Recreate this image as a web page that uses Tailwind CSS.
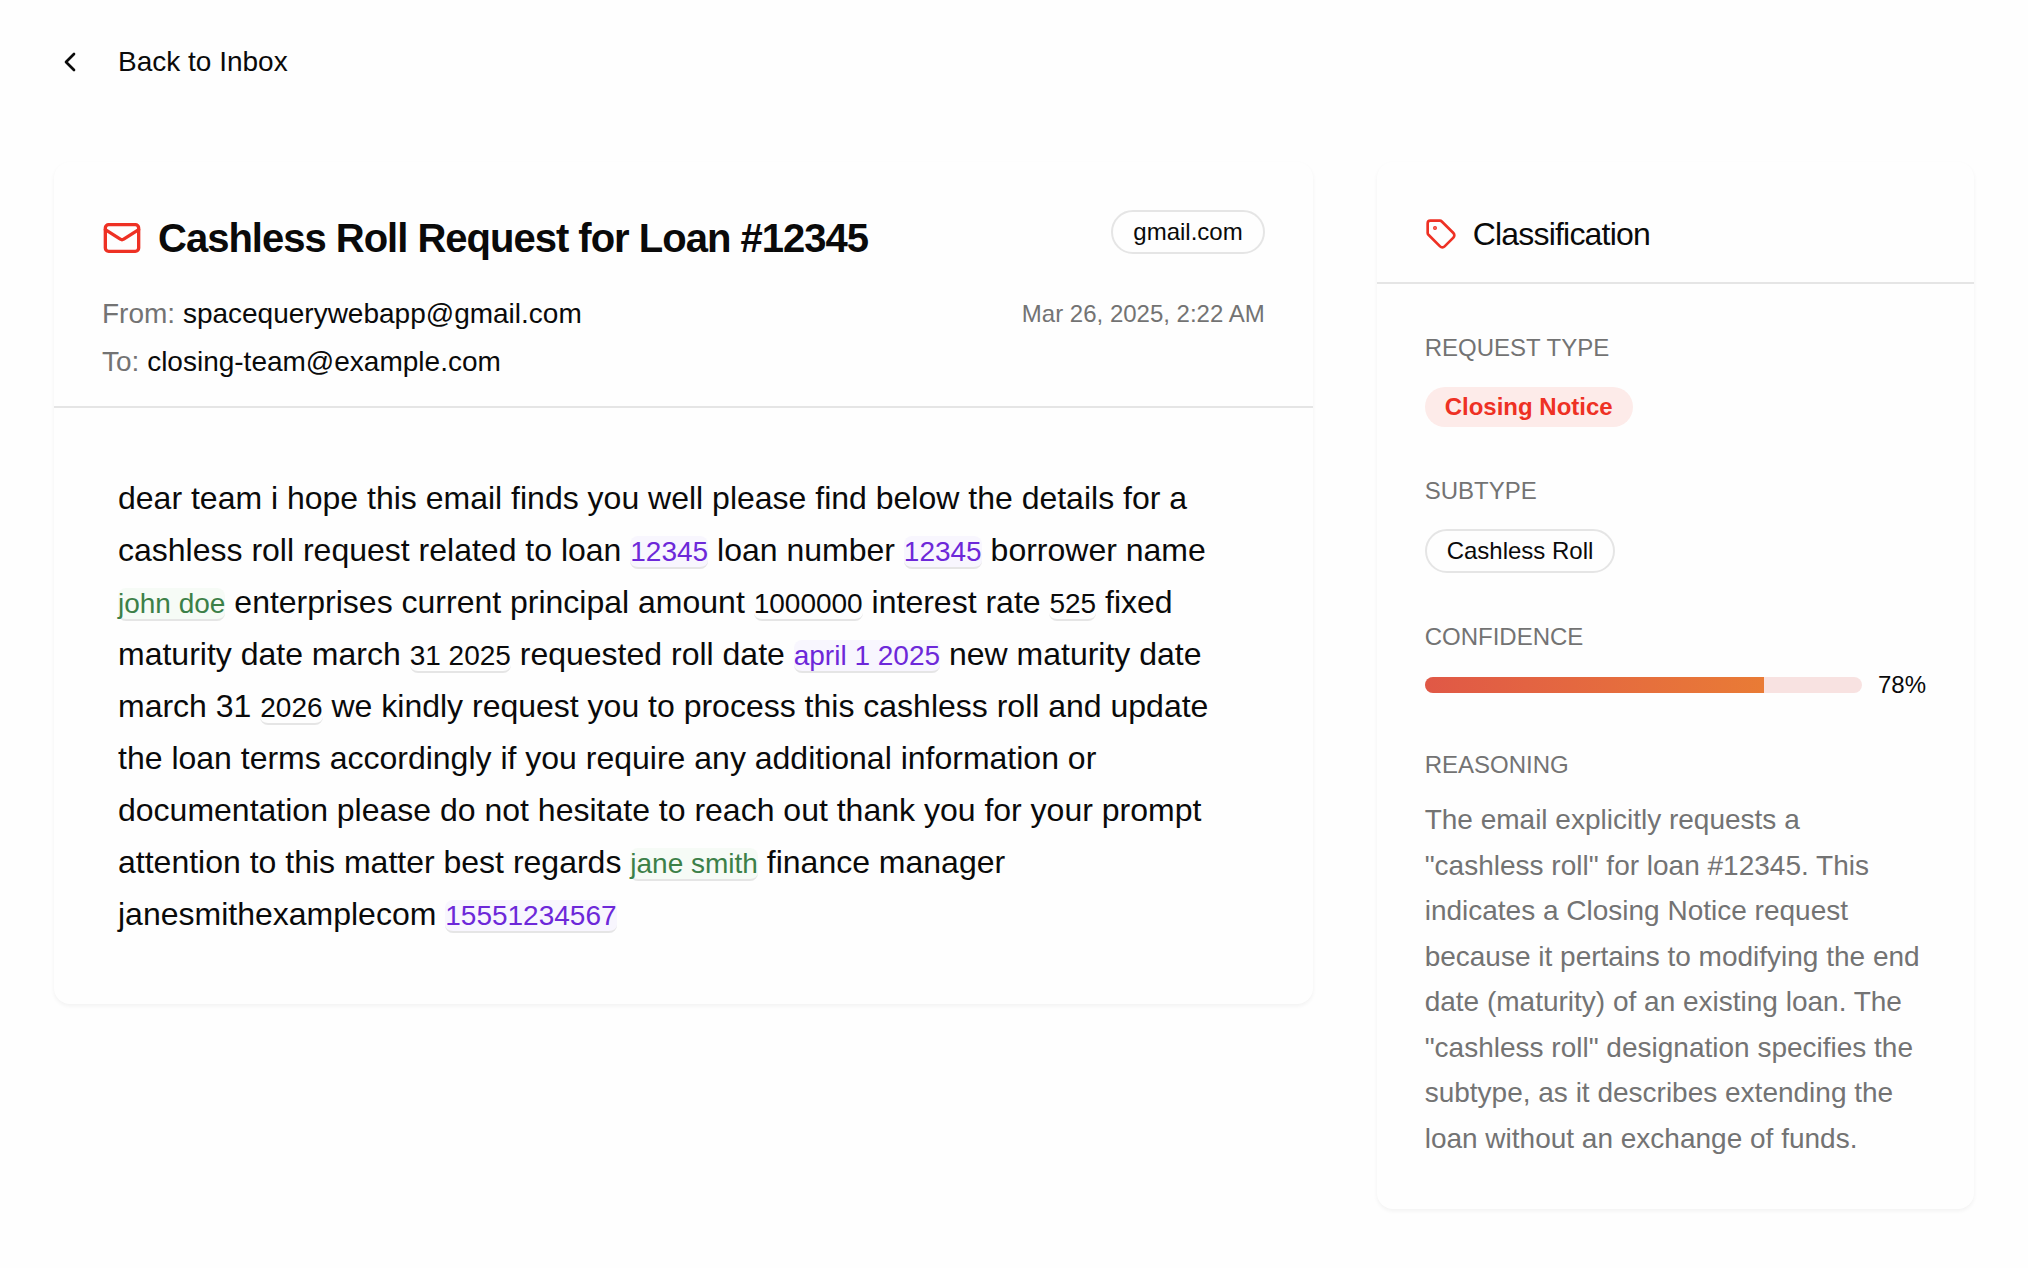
<!DOCTYPE html>
<html lang="en">
<head>
<meta charset="utf-8">
<meta name="viewport" content="width=device-width, initial-scale=1">
<title>Cashless Roll Request for Loan #12345</title>
<script src="https://cdn.jsdelivr.net/npm/@tailwindcss/browser@4"></script>
</head>
<body class="min-h-screen bg-[#fefefe] font-['Liberation_Sans',Arial,sans-serif] text-[28px] leading-10 text-neutral-950">
<div class="mx-auto max-w-[1968px] px-6 pt-8">
  <nav class="flex h-[60px] items-center">
    <a href="#" class="flex items-center gap-8">
      <svg class="size-8" viewBox="0 0 24 24" fill="none" stroke="currentColor" stroke-width="2" stroke-linecap="round" stroke-linejoin="round" aria-hidden="true"><path d="m15 18-6-6 6-6"/></svg>
      Back to Inbox
    </a>
  </nav>

  <main class="mt-[70px] grid grid-cols-3 items-start gap-16">
    <article class="col-span-2 rounded-2xl bg-[#fefefe] shadow-[0_2px_4px_rgba(0,0,0,0.05)]">
      <header class="border-b-2 border-neutral-200 px-12 pt-12 pb-6">
        <div class="flex items-start justify-between">
          <h1 class="flex items-center gap-4 text-[40px] leading-14 font-bold tracking-tight">
            <svg class="size-10 text-[#ee3124]" viewBox="0 0 24 24" fill="none" stroke="currentColor" stroke-width="2" stroke-linecap="round" stroke-linejoin="round" aria-hidden="true"><rect width="20" height="16" x="2" y="4" rx="2"/><path d="m22 7-8.97 5.7a1.94 1.94 0 0 1-2.06 0L2 7"/></svg>
            Cashless Roll Request for Loan #12345
          </h1>
          <span class="rounded-full border-2 border-neutral-200 px-5 py-1 text-2xl leading-8">gmail.com</span>
        </div>
        <div class="mt-7 flex items-start justify-between">
          <div class="flex flex-col gap-2">
            <p><span class="text-neutral-500">From:</span> spacequerywebapp@gmail.com</p>
            <p><span class="text-neutral-500">To:</span> closing-team@example.com</p>
          </div>
          <time datetime="2025-03-26T02:22" class="text-2xl leading-10 text-neutral-500">Mar 26, 2025, 2:22 AM</time>
        </div>
      </header>
      <p class="p-16 text-[32px] leading-relaxed">dear team i hope this email finds you well please find below the details for a cashless roll request related to loan <span class="rounded-lg border-b-2 border-neutral-200 bg-[#f8f6fe] text-[28px] text-[#6d28d9]">12345</span> loan number <span class="rounded-lg border-b-2 border-neutral-200 bg-[#f8f6fe] text-[28px] text-[#6d28d9]">12345</span> borrower name <span class="rounded-lg border-b-2 border-neutral-200 bg-[#f6fbf6] text-[28px] text-[#3c8048]">john doe</span> enterprises current principal amount <span class="rounded-lg border-b-2 border-neutral-200 text-[28px]">1000000</span> interest rate <span class="rounded-lg border-b-2 border-neutral-200 text-[28px]">525</span> fixed maturity date march <span class="rounded-lg border-b-2 border-neutral-200 text-[28px]">31 2025</span> requested roll date <span class="rounded-lg border-b-2 border-neutral-200 bg-[#f8f6fe] text-[28px] text-[#6d28d9]">april 1 2025</span> new maturity date march 31 <span class="rounded-lg border-b-2 border-neutral-200 text-[28px]">2026</span> we kindly request you to process this cashless roll and update the loan terms accordingly if you require any additional information or documentation please do not hesitate to reach out thank you for your prompt attention to this matter best regards <span class="rounded-lg border-b-2 border-neutral-200 bg-[#f6fbf6] text-[28px] text-[#3c8048]">jane smith</span> finance manager janesmithexamplecom <span class="rounded-lg border-b-2 border-neutral-200 bg-[#f8f6fe] text-[28px] text-[#6d28d9]">15551234567</span></p>
    </article>

    <aside class="rounded-2xl bg-[#fefefe] shadow-[0_2px_4px_rgba(0,0,0,0.05)]">
      <header class="border-b-2 border-neutral-200 px-12 pt-12 pb-6">
        <h2 class="flex items-center gap-4 text-[32px] leading-12 tracking-tight">
          <svg class="size-8 text-[#ee3124]" viewBox="0 0 24 24" fill="none" stroke="currentColor" stroke-width="2" stroke-linecap="round" stroke-linejoin="round" aria-hidden="true"><path d="M12.586 2.586A2 2 0 0 0 11.172 2H4a2 2 0 0 0-2 2v7.172a2 2 0 0 0 .586 1.414l8.704 8.704a2.426 2.426 0 0 0 3.42 0l6.58-6.58a2.426 2.426 0 0 0 0-3.42z"/><circle cx="7.5" cy="7.5" r=".5" fill="currentColor"/></svg>
          Classification
        </h2>
      </header>
      <div class="flex flex-col gap-12 px-12 pt-12 pb-12">
        <section class="flex flex-col items-start gap-[23px]">
          <h3 class="text-2xl leading-8 text-neutral-500">REQUEST TYPE</h3>
          <span class="rounded-full bg-[#fdebe9] px-5 py-1 text-2xl leading-8 font-bold text-[#ee3124]">Closing Notice</span>
        </section>
        <section class="flex flex-col items-start gap-[22px]">
          <h3 class="text-2xl leading-8 text-neutral-500">SUBTYPE</h3>
          <span class="rounded-full border-2 border-neutral-200 px-5 py-1 text-2xl leading-8">Cashless Roll</span>
        </section>
        <section class="flex flex-col gap-4">
          <h3 id="confidence" class="text-2xl leading-8 text-neutral-500">CONFIDENCE</h3>
          <div class="flex items-center gap-4">
            <div role="progressbar" aria-labelledby="confidence" aria-valuenow="78" aria-valuemin="0" aria-valuemax="100" class="h-4 flex-1 overflow-hidden rounded-full bg-[#f8e2e1]">
              <div class="h-full bg-linear-to-r from-[#e05846] to-[#e97b35]" style="width:77.5%"></div>
            </div>
            <span class="text-2xl leading-8">78%</span>
          </div>
        </section>
        <section class="flex flex-col gap-4">
          <h3 class="text-2xl leading-8 text-neutral-500">REASONING</h3>
          <p class="leading-relaxed text-neutral-500">The email explicitly requests a "cashless roll" for loan #12345. This indicates a Closing Notice request because it pertains to modifying the end date (maturity) of an existing loan. The "cashless roll" designation specifies the subtype, as it describes extending the loan without an exchange of funds.</p>
        </section>
      </div>
    </aside>
  </main>
</div>
</body>
</html>
